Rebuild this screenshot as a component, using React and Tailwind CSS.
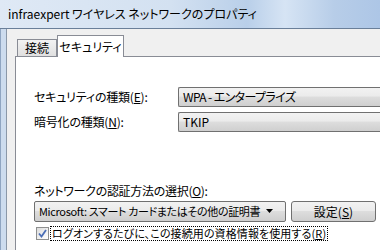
import React from "react";

const jp = { fontFamily: '"Noto Sans CJK JP", "Noto Sans", sans-serif' };

function ComboBox({ children, className = "", textClass = "", arrow = false }) {
  return (
    <div
      className={`h-[20px] border border-[#707070] rounded-[2px] bg-[linear-gradient(#f2f2f2_0%,#ebebeb_45%,#dddddd_50%,#cfcfcf_100%)] flex items-center pl-[4px] text-black leading-none ${className}`}
    >
      <span className={`flex-1 whitespace-nowrap ${textClass}`}>{children}</span>
      {arrow && (
        <svg width="9" height="5" viewBox="0 0 9 5" className="mr-[10px] shrink-0">
          <path d="M0 0H7L3.5 4Z" fill="#000" />
        </svg>
      )}
    </div>
  );
}

export default function App() {
  return (
    <div className="w-[380px] h-[250px] overflow-hidden relative bg-[#f0f0f0] [font-feature-settings:'palt']" style={jp}>
      {/* Title bar */}
      <div className="h-[29px] border-b border-[#6a7f99] bg-[linear-gradient(90deg,#dfe9f5_0%,#d3e1f1_45%,#b9cfe9_65%,#d6e4f4_75%,#b7cde8_88%,#adc6e6_100%)] flex items-center pl-[8px]">
        <span className="text-[12px] text-black whitespace-nowrap leading-none">
          infraexpert ワイヤレス ネットワークのプロパティ
        </span>
      </div>
      <div className="flex h-[221px]">
        {/* left frame */}
        <div className="w-[7px] bg-[#cddcee] border-l border-[#8fa5c1] border-r border-r-[#8b98a8]" />
        <div className="flex-1 pl-[8px] pt-[6px] flex flex-col">
          {/* tabs */}
          <div className="flex items-end h-[21px] pl-[2px]">
            <div className="w-[40px] h-[17px] border border-b-0 border-[#898c95] bg-[linear-gradient(#f2f2f2,#e0e0e0)] flex items-center justify-center text-[12px] leading-none">
              接続
            </div>
            <div className="w-[67px] h-[22px] -mb-[1px] relative z-10 border border-b-0 border-[#898c95] bg-white flex items-center justify-center text-[12px] leading-none">
              セキュリティ
            </div>
          </div>
          {/* pane */}
          <div className="flex-1 bg-white border-l border-t border-[#898c95] pl-[18px] pt-[30px] text-[12px] leading-none">
            <div className="flex items-center h-[20px]">
              <span className="w-[144px] whitespace-nowrap tracking-[-0.2px]">セキュリティの種類(<span className="underline">E</span>):</span>
              <ComboBox className="flex-1 border-r-0 rounded-r-none" textClass="text-[12px] tracking-[-0.6px]">WPA - エンタープライズ</ComboBox>
            </div>
            <div className="flex items-center h-[20px] mt-[5px]">
              <span className="w-[144px] whitespace-nowrap tracking-[-0.2px]">暗号化の種類(<span className="underline">N</span>):</span>
              <ComboBox className="flex-1 border-r-0 rounded-r-none" textClass="text-[12px]">TKIP</ComboBox>
            </div>
            <div className="mt-[53px] whitespace-nowrap tracking-[-0.3px]">
              ネットワークの認証方法の選択(<span className="underline">O</span>):
            </div>
            <div className="flex items-center mt-[4px] h-[21px]">
              <ComboBox arrow className="w-[252px] h-[21px]" textClass="text-[11px] tracking-[-0.35px]">
                Microsoft: スマート カードまたはその他の証明書
              </ComboBox>
              <div className="ml-[5px] w-[85px] h-[21px] border border-[#707070] rounded-[3px] bg-[linear-gradient(#f2f2f2_0%,#ebebeb_45%,#dddddd_50%,#cfcfcf_100%)] flex items-center justify-center">
                設定(<span className="underline">S</span>)
              </div>
            </div>
            <div className="flex items-center mt-[4px] h-[15px] pl-[2px]">
              <div className="w-[13px] h-[13px] border border-[#8e8f8f] bg-[linear-gradient(135deg,#dcdcdc,#ffffff)] flex items-center justify-center">
                <svg width="9" height="9" viewBox="0 0 9 9">
                  <path d="M1 4.5L3.5 7.5L8 1" stroke="#4a6db5" strokeWidth="1.8" fill="none" />
                </svg>
              </div>
              <span className="ml-[1px] border border-dotted border-black px-[1px] py-[1px] whitespace-nowrap text-[11px] tracking-[0.1px]">
                ログオンするたびに、この接続用の資格情報を使用する(<span className="underline">R</span>)
              </span>
            </div>
          </div>
        </div>
      </div>
    </div>
  );
}
